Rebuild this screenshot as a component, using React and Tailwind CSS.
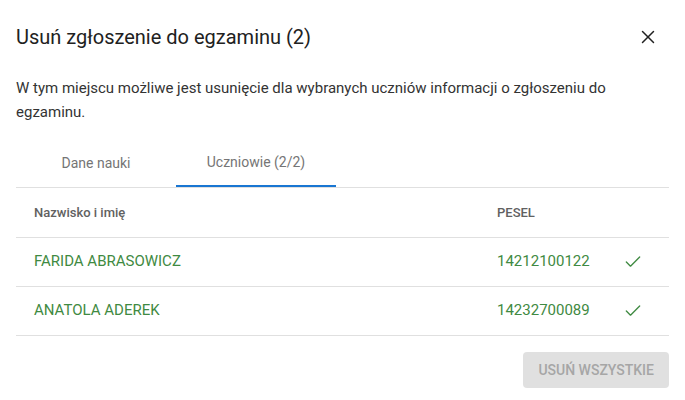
import { X, Check } from "lucide-react";

const students = [
  { name: "FARIDA ABRASOWICZ", pesel: "14212100122" },
  { name: "ANATOLA ADEREK", pesel: "14232700089" },
];

const App = () => (
  <div className="w-[685px] h-[400px] bg-white font-['Roboto',sans-serif] text-[#212121]">
    <div className="flex items-center justify-between pl-4 pr-[25px] pt-[25px] pb-[27px]">
      <h2 className="text-[20px] leading-6 font-normal">Usuń zgłoszenie do egzaminu (2)</h2>
      <button className="flex items-center justify-center w-6 h-6 text-[#212121]">
        <X size={22} strokeWidth={1.6} />
      </button>
    </div>

    <div className="px-4">
      <p className="text-[15px] leading-6 text-[#333]">
        W tym miejscu możliwe jest usunięcie dla wybranych uczniów informacji o zgłoszeniu do
        egzaminu.
      </p>

      <div className="flex mt-[15px] border-b border-[#e0e0e0]">
        <button className="w-40 h-12 text-sm text-[#757575]">Dane nauki</button>
        <button className="w-40 h-12 text-sm text-[#757575] border-b-2 border-[#1976d2]">
          Uczniowie (2/2)
        </button>
      </div>

      <table className="w-full border-collapse">
        <thead>
          <tr className="border-b border-[#e0e0e0] h-[49px]">
            <th className="pl-[18px] text-left text-[13px] font-medium text-[#616161]">
              Nazwisko i imię
            </th>
            <th className="w-[120px] text-left text-[13px] font-medium text-[#616161]">PESEL</th>
            <th className="w-[52px]"></th>
          </tr>
        </thead>
        <tbody>
          {students.map((s) => (
            <tr key={s.pesel} className="border-b border-[#e0e0e0] h-[49px] text-[#3f8a42]">
              <td className="pl-[18px] text-[15px]">{s.name}</td>
              <td className="text-[15px]">{s.pesel}</td>
              <td>
                <Check size={20} strokeWidth={1.6} className="ml-[6px]" />
              </td>
            </tr>
          ))}
        </tbody>
      </table>

      <div className="flex justify-end mt-4">
        <button className="h-9 px-[15px] rounded bg-[#e0e0e0] text-[#a6a6a6] text-sm font-medium">
          USUŃ WSZYSTKIE
        </button>
      </div>
    </div>
  </div>
);

export default App;
